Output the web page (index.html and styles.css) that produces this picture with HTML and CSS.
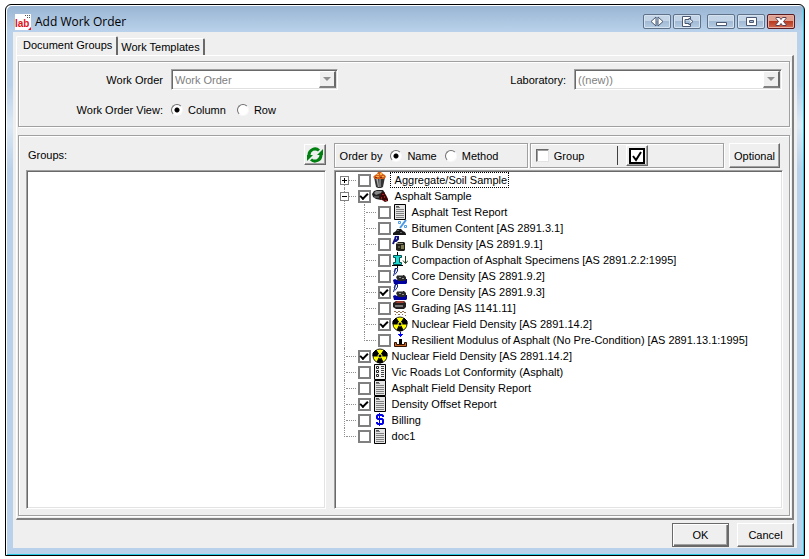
FILE: index.html
```html
<!DOCTYPE html>
<html lang="en">
<head>
<meta charset="utf-8">
<title>Add Work Order</title>
<link rel="stylesheet" href="styles.css">
</head>
<body>
<svg class="defs" aria-hidden="true">
  <symbol id="i-bucket" viewBox="0 0 16 16"><path d="M2 5h11l-2 10-2 1H6l-2-1z" fill="#333"/><path d="M4 6h2l1 9H6z" fill="#aaa"/><path d="M7 6h2v9H7z" fill="#777"/><path d="M1 5l2-2 2-1 1-2h3l2 2 2 1 1 2-2 2H3z" fill="#d2601a"/><path d="M5 2h2v1H5zM8 1h2v2H8zM4 4h3v1H4zM10 4h2v1h-2z" fill="#ffb040"/><path d="M3 5h2v1H3zM8 5h2v1H8z" fill="#8b2a10"/></symbol>
  <symbol id="i-spill" viewBox="0 0 16 16"><path d="M0 6l2-3 3-1h6l2 3-1 5-3 2-5-1-3-2z" fill="#222"/><path d="M2 5l2-2h6l-1 2-5 2z" fill="#888"/><path d="M2 8h5v2H2z" fill="#555"/><path d="M9 5l3-1 2 3 2 4v2l-3 1-3-2-2-2z" fill="#3a0505"/><path d="M10 6h2v1h-2zM12 8h1v2h-1zM9 9h1v2H9zM13 12h2v1h-2zM11 12h1v1h-1z" fill="#a02020"/></symbol>
  <symbol id="i-report" viewBox="0 0 16 16"><path d="M2.500.5h11v15h-11z" fill="#e4e4e4" stroke="#000"/><path d="M4 3.500h4M4 5.500h8M4 7.500h8M4 9.500h8M4 11.500h8M4 13.500h8" stroke="#808080"/><path d="M4 2.500h3" stroke="#555"/></symbol>
  <symbol id="i-lot" viewBox="0 0 16 16"><path d="M2.500.5h11v15h-11z" fill="#f4f4f4" stroke="#000"/><path d="M4.500 2.500h2v2h-2zM4.500 6.500h2v2h-2zM4.500 10.500h2v2h-2z" fill="#fff" stroke="#222"/><path d="M9 2.500h3M9 4.500h3M9 6.500h3M9 8.500h3M9 10.500h3M9 12.500h3" stroke="#444"/></symbol>
  <symbol id="i-bitumen" viewBox="0 0 16 16"><path d="M1 15v-2l3-2 1-2h4l2 2 2 1 1 2v1z" fill="#181818"/><path d="M5 10h2v1H5zM8 12h2v1H8z" fill="#666"/><path d="M6.500 1.500h2v2h-2zM12.500 5.500h2v2h-2z" fill="none" stroke="#4a9ae8"/><path d="M14 0L8 8" stroke="#4a9ae8" stroke-width="2" fill="none"/></symbol>
  <symbol id="i-bulk" viewBox="0 0 16 16"><path d="M1 8l2-5 1-3h2v3L4 5H2" fill="none" stroke="#101080" stroke-width="2"/><path d="M4 8l2-2h6l1 1v7l-1 1H6l-2-1z" fill="#202018"/><path d="M5 7h6v1H5z" fill="#888870"/><path d="M6 10h2v2H6z" fill="#555548"/><path d="M9 9h3v4H9z" fill="#807a50"/></symbol>
  <symbol id="i-compact" viewBox="0 0 16 16"><path d="M0 13.500h11M5.500 0v16" stroke="#000"/><path d="M1.500 3.500h8v2h-2v5h2v2h-8v-2h2v-5h-2z" fill="#20d8d0" stroke="#005050"/><path d="M13.500 4v7M11 8.500l2.500 3 2.500-3" stroke="#204020" fill="none"/></symbol>
  <symbol id="i-core" viewBox="0 0 16 16"><path d="M1.500 8L3 3V.5h2.500V3L3 6.500" fill="none" stroke="#102080"/><path d="M2 4l2-4" stroke="#102080"/><path d="M1 12l2-1 2 1 2-1h8v4l-1 1H2z" fill="#0000a0"/><path d="M4 9l2-2h6l2 2v3l-2 1H6z" fill="#282828"/><path d="M6 7h5v1H6zM7 9h2v1H7zM10 10h2v1h-2z" fill="#909090"/></symbol>
  <symbol id="i-grading" viewBox="0 0 16 16"><path d="M1 3l3-2h8l2 2v4l-2 2H4L1 7z" fill="#242020"/><path d="M3 2l3-1h5l2 1-2 1H5z" fill="#a04030"/><path d="M3 5h8v2H3z" fill="#777"/><path d="M2 11h2v1H2zM6 11h2v1H6zM10 11h2v1h-2zM4 12h2v1H4zM8 12h2v1H8zM12 12h2v1h-2zM3 14h1v1H3zM6 14h2v1H6zM10 14h1v1h-1zM13 15h1v1h-1z" fill="#907050"/></symbol>
  <symbol id="i-nuclear" viewBox="0 0 16 16"><circle cx="8" cy="8" r="7" fill="#ffff00" stroke="#222"/><path d="M8 8L4 2 1 5v3zM8 8l4-6 3 3v3zM8 8l-3 6 3 1 3-1z" fill="#000" stroke="#000"/><circle cx="8" cy="8" r="2" fill="#000" stroke="#ffff00"/></symbol>
  <symbol id="i-modulus" viewBox="0 0 16 16"><path d="M8.500 0v5M6 2.500h5" stroke="#0000ff"/><path d="M7 3h3v1H7z" fill="#0000ff"/><path d="M7 7h3v5H7z" fill="#000"/><path d="M2.500 14.500v-4h2v2h8v-2h2v4z" fill="#c86828" stroke="#301000"/></symbol>
  <symbol id="i-dollar" viewBox="0 0 16 16"><path d="M11 5V4L10 3H6L5 4v2l1 1h4l1 1v3l-1 1H6l-1-1v-1" fill="none" stroke="#0000e8" stroke-width="2"/><path d="M7.500 1v13" stroke="#0000e8"/></symbol>
</svg>

<main class="window">
  <header class="titlebar">
    <svg class="logo" viewBox="0 0 16 16" aria-hidden="true"><path fill="#fff" d="M0 0h16v16H0z"/><text class="mark" x="0" y="13">lab</text><path d="M10 1h1v1h-1zM12 1h1v1h-1zM14 1h1v1h-1zM12 3h1v1h-1zM14 3h1v1h-1z" fill="#555"/><path d="M16 13v3h-3z" fill="#e01020"/></svg>
    <h1>Add Work Order</h1>
    <div class="controls">
      <button class="tb" aria-label="Resize"><svg viewBox="0 0 14 11"><path d="M6 1v9L1 5.500zM8 1v9l5-4.500z" fill="#fff" stroke="#4b5872"/></svg></button>
      <button class="tb" aria-label="Detach"><svg viewBox="0 0 14 11"><path d="M10.500 3V.5h-8v10h8V8M5 3.500h4V2l4 3.500L9 9V7.500H5z" fill="#fff" stroke="#4b5872"/></svg></button>
      <button class="tb apart" aria-label="Minimize"><svg viewBox="0 0 14 11"><path d="M2.500 6.500h10v3h-10z" fill="#fff" stroke="#4b5872"/></svg></button>
      <button class="tb" aria-label="Maximize"><svg viewBox="0 0 14 11"><path d="M2.500 1.500h10v8h-10zM5.500 4.500h4v2h-4z" fill="#fff" fill-rule="evenodd" stroke="#4b5872"/></svg></button>
      <button class="tb close" aria-label="Close"><svg viewBox="0 0 14 11"><path d="M2 1.500h3.500L7 3.500l1.500-2H12v1L9.500 5.500 12 8.500v1H8.500L7 7.500l-1.500 2H2v-1l2.500-3L2 2.500z" fill="#fff" stroke="#5c4050"/></svg></button>
    </div>
  </header>

  <div class="client">
    <div class="tabs" role="tablist">
      <button class="tab active" role="tab" aria-selected="true">Document Groups</button>
      <button class="tab" role="tab" aria-selected="false">Work Templates</button>
    </div>

    <div class="pane">
      <section class="etched order">
        <label class="name" for="wo">Work Order</label>
        <span class="combo"><select id="wo" disabled><option>Work Order</option></select><span class="drop"></span></span>
        <label class="name" for="laboratory">Laboratory:</label>
        <span class="combo"><select id="laboratory" disabled><option>((new))</option></select><span class="drop"></span></span>
        <span class="name">Work Order View:</span>
        <span class="radios">
          <label><input type="radio" name="view" checked>Column</label>
          <label><input type="radio" name="view">Row</label>
        </span>
      </section>

      <section class="etched main">
        <div class="col">
          <div class="bar groups">
            <span>Groups:</span>
            <button class="btn icon" aria-label="Refresh"><svg viewBox="0 0 18 18"><path d="M3 9a6 6 0 0 1 10-4.500M15 9a6 6 0 0 1-10 4.500" fill="none" stroke="#008010" stroke-width="3"/><path d="M17 3v6h-6zM1 15V9h6z" fill="#008010"/></svg></button>
          </div>
          <div class="list"></div>
        </div>
        <div class="col">
          <div class="bar">
            <div class="etched tool">
              <span>Order by</span>
              <label><input type="radio" name="by" checked>Name</label>
              <label><input type="radio" name="by">Method</label>
            </div>
            <div class="etched tool">
              <label><input class="sunk" type="checkbox">Group</label>
              <span class="divider"></span>
              <button class="btn icon" aria-label="Select all"><svg viewBox="0 0 18 18"><path d="M2 2h14v14H2z" fill="#fff" stroke="#000" stroke-width="2"/><path d="M5 9l3 4 5-8" fill="none" stroke="#000" stroke-width="2"/></svg></button>
            </div>
            <button class="btn optional">Optional</button>
          </div>
          <div class="list">
            <ul class="tree">
              <li class="parent"><button class="expand closed" aria-label="Expand"></button><label><input type="checkbox"><svg><use href="#i-bucket"/></svg><span class="focus">Aggregate/Soil Sample</span></label></li>
              <li class="parent"><button class="expand" aria-label="Collapse"></button><label><input type="checkbox" checked><svg><use href="#i-spill"/></svg><span>Asphalt Sample</span></label>
                <ul>
                  <li><label><input type="checkbox"><svg><use href="#i-report"/></svg><span>Asphalt Test Report</span></label></li>
                  <li><label><input type="checkbox"><svg><use href="#i-bitumen"/></svg><span>Bitumen Content [AS 2891.3.1]</span></label></li>
                  <li><label><input type="checkbox"><svg><use href="#i-bulk"/></svg><span>Bulk Density [AS 2891.9.1]</span></label></li>
                  <li><label><input type="checkbox"><svg><use href="#i-compact"/></svg><span>Compaction of Asphalt Specimens [AS 2891.2.2:1995]</span></label></li>
                  <li><label><input type="checkbox"><svg><use href="#i-core"/></svg><span>Core Density [AS 2891.9.2]</span></label></li>
                  <li><label><input type="checkbox" checked><svg><use href="#i-core"/></svg><span>Core Density [AS 2891.9.3]</span></label></li>
                  <li><label><input type="checkbox"><svg><use href="#i-grading"/></svg><span>Grading [AS 1141.11]</span></label></li>
                  <li><label><input type="checkbox" checked><svg><use href="#i-nuclear"/></svg><span>Nuclear Field Density [AS 2891.14.2]</span></label></li>
                  <li><label><input type="checkbox"><svg><use href="#i-modulus"/></svg><span>Resilient Modulus of Asphalt (No Pre-Condition) [AS 2891.13.1:1995]</span></label></li>
                </ul>
              </li>
              <li><label><input type="checkbox" checked><svg><use href="#i-nuclear"/></svg><span>Nuclear Field Density [AS 2891.14.2]</span></label></li>
              <li><label><input type="checkbox"><svg><use href="#i-lot"/></svg><span>Vic Roads Lot Conformity (Asphalt)</span></label></li>
              <li><label><input type="checkbox"><svg><use href="#i-report"/></svg><span>Asphalt Field Density Report</span></label></li>
              <li><label><input type="checkbox" checked><svg><use href="#i-report"/></svg><span>Density Offset Report</span></label></li>
              <li><label><input type="checkbox"><svg><use href="#i-dollar"/></svg><span>Billing</span></label></li>
              <li><label><input type="checkbox"><svg><use href="#i-report"/></svg><span>doc1</span></label></li>
            </ul>
          </div>
        </div>
      </section>
    </div>

    <footer>
      <button class="btn action default">OK</button>
      <button class="btn action">Cancel</button>
    </footer>
  </div>
</main>
</body>
</html>
```

FILE: styles.css
```css
*, *::before, *::after { box-sizing: border-box; }

body {
  margin: 0;
  min-height: 100vh;
  display: flex;
  padding: 4px 4px 3px 5px;
  background: #fff;
  color: #000;
  font: 11px/16px "Liberation Sans", Arial, sans-serif;
}

button, input, select { font: inherit; color: inherit; margin: 0; }
.defs { position: absolute; width: 0; height: 0; }
svg { display: block; flex: none; }

/* Window frame */
.window {
  flex: 1;
  display: flex;
  flex-direction: column;
  border: 1px solid #000;
  border-radius: 6px 6px 0 0;
  padding: 0 7px 7px;
  background: linear-gradient(#98b4d2, #b9d1ea 26px, #b9d1ea 80px, #dce8f5 120px, #b9d1ea 165px);
  box-shadow: inset 1px 1px 0 #fff, inset -1px -1px 0 #28c8e0;
}
.titlebar { display: flex; align-items: center; height: 27px; padding: 6px 2px 0; }
.logo { width: 16px; height: 16px; }
.mark { font: bold 10px "Liberation Sans", sans-serif; fill: #e01020; }
h1 { margin: 0 0 0 4px; font: 12px/16px "Open Sans", "Noto Sans", sans-serif; }
.controls { display: flex; gap: 2px; margin-left: auto; }
.tb {
  display: flex;
  align-items: center;
  justify-content: center;
  width: 28px;
  height: 15px;
  padding: 0;
  border: 1px solid #5f7289;
  border-radius: 2px;
  background: linear-gradient(#c4d5e8 50%, #a3bbd5 50%, #b5cce4);
  box-shadow: inset 0 0 0 1px #d5e3f1;
}
.tb.apart { margin-left: 4px; }
.tb svg { width: 14px; height: 11px; }
.tb.close { border-color: #5a1a20; background: linear-gradient(#dfa090 50%, #b83a20 50%, #d06a50); box-shadow: inset 0 0 0 1px #e8b0a4; }

.client { flex: 1; display: flex; flex-direction: column; padding: 4px 3px 1px; background: #efefef; }

/* Tabs */
.tabs { display: flex; align-items: flex-end; height: 19px; }
.tab {
  height: 17px;
  padding: 0 3px;
  border: 0;
  border-right: 2px solid #696969;
  border-top: 1px solid #fff;
  border-radius: 2px 2px 0 0;
  background: none;
  line-height: 16px;
}
.tab.active { height: 19px; padding: 0 4px 2px 6px; border-left: 1px solid #fff; }

.pane {
  flex: 1;
  display: flex;
  flex-direction: column;
  gap: 8px;
  padding: 5px 2px 2px 1px;
  border: 1px solid #fff;
  border-right: 2px solid #808080;
  border-bottom: 2px solid #808080;
}
.etched { border: 1px solid #a0a0a0; box-shadow: 1px 1px 0 #fff, inset 1px 1px 0 #fff; }

/* Work order fields */
.order {
  display: grid;
  grid-template-columns: 144px 167px 1fr 208px;
  column-gap: 8px;
  row-gap: 12px;
  align-items: center;
  padding: 7px 7px 8px 0;
}
.name { text-align: right; }
.combo {
  position: relative;
  display: flex;
  height: 21px;
  border: 1px solid #a0a0a0;
  border-right-color: #fff;
  border-bottom-color: #fff;
  background: #fff;
  box-shadow: inset 1px 1px 0 #696969, inset -1px -1px 0 #e0e0e0;
}
.combo select { flex: 1; appearance: none; border: 0; padding: 0 3px; background: none; color: #808080; opacity: 1; }
.drop {
  position: absolute;
  top: 1px;
  right: 1px;
  bottom: 1px;
  width: 17px;
  display: grid;
  place-items: center;
  background: #efefef;
  border: 1px solid #fff;
  border-right: 2px solid #696969;
  border-bottom: 2px solid #808080;
  pointer-events: none;
}
.drop::before { content: ""; border: 4px solid transparent; border-top-color: #909090; border-bottom: 0; }

label { display: flex; align-items: center; }
.order > label { justify-content: flex-end; }
.radios { display: flex; gap: 11px; }
input[type="radio"] {
  appearance: none;
  width: 12px;
  height: 12px;
  margin-right: 5px;
  border: 1px solid;
  border-color: #707070 #f8f8f8 #f8f8f8 #707070;
  border-radius: 50%;
  background: #fff;
}
input[type="radio"]:checked { background: radial-gradient(circle, #000 0 2px, #fff 3px); }

/* Group and document lists */
.main {
  flex: 1;
  display: grid;
  grid-template-columns: 2fr 3fr;
  gap: 8px;
  padding: 7px 6px 6px 7px;
}
.col { display: flex; flex-direction: column; gap: 2px; min-width: 0; }
.bar { display: flex; gap: 2px; height: 25px; }
.groups { align-items: center; justify-content: space-between; padding: 0 0 2px 2px; }
.list {
  flex: 1;
  padding: 1px 4px;
  border: 1px solid #a0a0a0;
  border-right-color: #fff;
  border-bottom-color: #fff;
  box-shadow: inset 1px 1px 0 #696969, inset -1px -1px 0 #e3e3e3;
  background: #fff;
}
.tool { flex: 1; display: flex; align-items: center; gap: 8px; padding: 0 5px; }
.divider { width: 1px; height: 19px; margin-left: auto; background: #404040; }
.tool .icon { margin-right: 70px; }

.btn {
  background: #efefef;
  border: 1px solid;
  border-color: #fff #696969 #696969 #fff;
  box-shadow: inset -1px -1px 0 #a0a0a0;
  padding: 0;
  text-align: center;
}
.icon { width: 22px; height: 21px; display: grid; place-items: center; }
.icon svg { width: 18px; height: 18px; }
.optional { width: 51px; height: 25px; margin: 0 3px; }

/* Document tree */
.tree, .tree ul { margin: 0; padding: 0; list-style: none; }
.tree { padding: 0 0 0 19px; }
.tree ul { padding-left: 20px; }
.tree li { position: relative; }
.tree label { height: 16px; white-space: nowrap; }
.tree li::before {
  content: "";
  position: absolute;
  top: 8px;
  left: -12px;
  width: 10px;
  border-top: 1px dotted #909090;
}
.tree li::after {
  content: "";
  position: absolute;
  top: 0;
  bottom: 0;
  left: -14px;
  border-left: 1px dotted #909090;
}
.tree > li:first-child::after { top: 8px; }
.tree li:last-child::after { bottom: auto; height: 9px; }
.tree svg { width: 16px; height: 16px; margin: 0 4px 0 1px; }
.tree .parent > label > svg { margin-right: 2px; }
.tree .parent > label > span { padding: 0 1px 0 4px; line-height: 14px; border: 1px solid transparent; }
.tree .parent > label > .focus { border: 1px dotted #000; }
.expand {
  position: absolute;
  z-index: 1;
  top: 4px;
  left: -18px;
  width: 9px;
  height: 9px;
  padding: 0;
  border: 1px solid #808080;
  background: linear-gradient(#000, #000) center / 5px 1px no-repeat #fff;
}
.expand.closed {
  background:
    linear-gradient(#000, #000) center / 5px 1px no-repeat,
    linear-gradient(#000, #000) center / 1px 5px no-repeat #fff;
}
input[type="checkbox"] {
  appearance: none;
  flex: none;
  display: grid;
  place-items: center;
  width: 13px;
  height: 13px;
  border: 2px solid #808080;
  background: #fff;
}
input.sunk[type="checkbox"] { margin-right: 5px; border: 1px solid; border-color: #696969 #e3e3e3 #e3e3e3 #696969; box-shadow: inset 1px 1px 0 #a0a0a0; }
input[type="checkbox"]:checked::before {
  content: "";
  width: 8px;
  height: 5px;
  margin-bottom: 2px;
  border: solid #000;
  border-width: 0 0 2px 2px;
  transform: rotate(-45deg);
}

/* Dialog buttons */
footer { display: flex; justify-content: flex-end; gap: 8px; padding: 3px 0 0; }
.action { width: 57px; height: 24px; }
.default { border-color: #696969; box-shadow: inset 1px 1px 0 #fff, inset -1px -1px 0 #696969, inset -2px -2px 0 #a0a0a0; }
```
